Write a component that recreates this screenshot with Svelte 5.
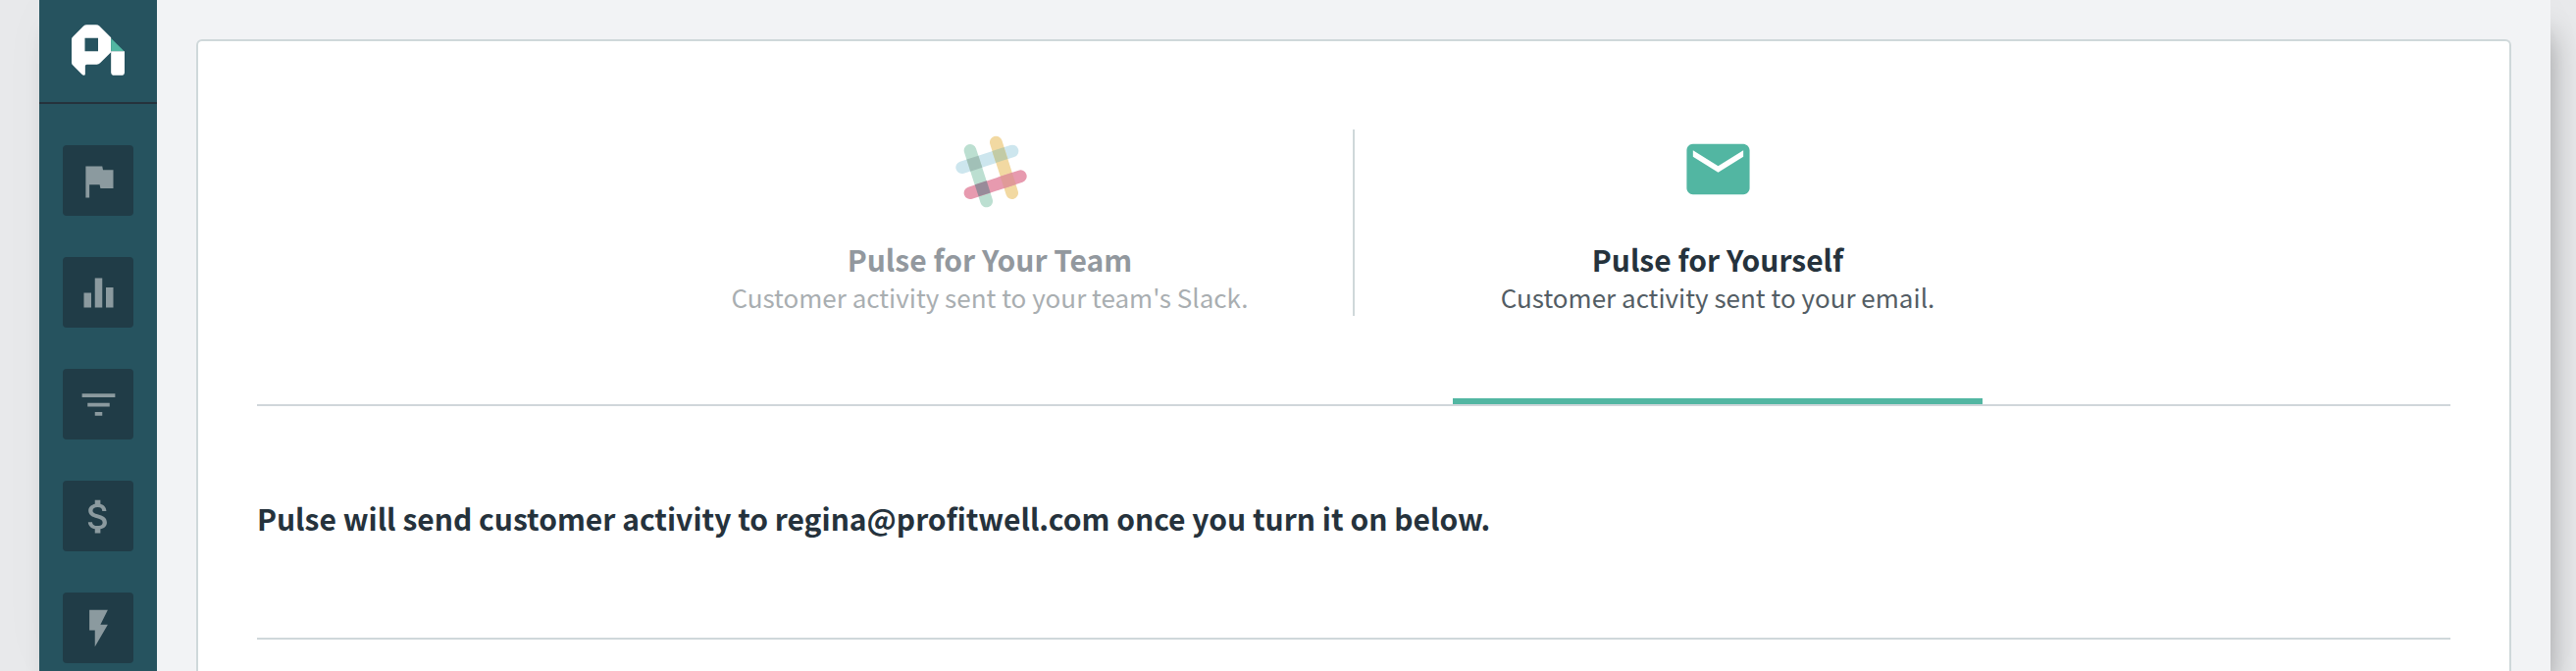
<script lang="ts">
	/**
	 * Pulse settings page
	 * Sidebar navigation plus the delivery picker (Slack team or personal email)
	 */
	type Tab = 'team' | 'yourself';

	let selected: Tab = $state('yourself');

	// 24x24 icon paths
	const navItems = [
		{ label: 'Goals', path: 'M14.4 6L14 4H5v17h2v-7h5.6l.4 2h7V6z' },
		{ label: 'Metrics', path: 'M10 20h4V4h-4v16zm-6 0h4v-8H4v8zM16 9v11h4V9h-4z' },
		{ label: 'Segments', path: 'M10 18h4v-2h-4v2zM3 6v2h18V6H3zm3 7h12v-2H6v2z' },
		{
			label: 'Revenue',
			path: 'M11.8 10.9c-2.27-.59-3-1.2-3-2.15 0-1.09 1.01-1.85 2.7-1.85 1.78 0 2.44.85 2.5 2.1h2.21c-.07-1.72-1.12-3.3-3.21-3.81V3h-3v2.16c-1.94.42-3.5 1.68-3.5 3.61 0 2.31 1.91 3.46 4.7 4.13 2.5.6 3 1.48 3 2.41 0 .69-.49 1.79-2.7 1.79-2.06 0-2.87-.92-2.98-2.1h-2.2c.12 2.19 1.76 3.42 3.68 3.83V21h3v-2.15c1.95-.37 3.5-1.5 3.5-3.55 0-2.84-2.43-3.81-4.7-4.4z'
		},
		{ label: 'Activity', path: 'M7 2v11h3v9l7-12h-4l4-8z' }
	];

	// Where the bars of the Slack hash cross
	const crossings = [
		{ x: 161, y: 140, fill: '#a1c0b7' },
		{ x: 186, y: 217, fill: '#988b99' },
		{ x: 239, y: 114, fill: '#c2cba5' },
		{ x: 264, y: 192, fill: '#e09a98' }
	];
</script>

<div class="shell">
	<aside class="sidebar">
		<a class="logo" href="#home" aria-label="Home">
			<svg viewBox="220 75 160 153" aria-hidden="true">
				<path
					fill="#fff"
					fill-rule="evenodd"
					d="M266 75H294Q300 75 304 79L339 114V158L306 191Q302 195 296 195H266Q261 195 261 200V224Q261 228 257 228Q254 228 251 225L223 197Q220 194 220 189V119Q220 115 223 112L256 79Q260 75 266 75ZM260 115V155H300V115Z"
				/>
				<path fill="#52b6a2" d="M339 116L379 155H339Z" />
				<path fill="#fff" d="M339 155H380V218Q380 228 370 228H349Q339 228 339 218Z" />
			</svg>
		</a>
		<nav class="nav" aria-label="Main">
			{#each navItems as item (item.label)}
				<a class="nav-item" href="#{item.label.toLowerCase()}" aria-label={item.label}>
					<svg viewBox="0 0 24 24" aria-hidden="true"><path d={item.path} /></svg>
				</a>
			{/each}
		</nav>
	</aside>

	<main class="main">
		<section class="card">
			<div class="tabs" role="tablist">
				<button
					type="button"
					role="tab"
					class="tab"
					class:active={selected === 'team'}
					aria-selected={selected === 'team'}
					onclick={() => (selected = 'team')}
				>
					<span class="tab-icon">
						<svg class="slack" viewBox="88 36 240 240" aria-hidden="true">
							<g stroke-width="38" stroke-linecap="round">
								<path stroke="#cde6ee" d="M123 152L277 102" />
								<path stroke="#f2d9a2" d="M227 75L276 230" />
								<path stroke="#bcdfd1" d="M148 100L198 255" />
								<path stroke="#e79aaf" d="M148 230L302 179" />
							</g>
							{#each crossings as c}
								<rect
									x={c.x - 19}
									y={c.y - 19}
									width="38"
									height="38"
									fill={c.fill}
									transform="rotate(-18 {c.x} {c.y})"
								/>
							{/each}
						</svg>
					</span>
					<span class="tab-title">Pulse for Your Team</span>
					<span class="tab-text">Customer activity sent to your team's Slack.</span>
				</button>

				<div class="divider"></div>

				<button
					type="button"
					role="tab"
					class="tab"
					class:active={selected === 'yourself'}
					aria-selected={selected === 'yourself'}
					onclick={() => (selected = 'yourself')}
				>
					<span class="tab-icon">
						<svg class="mail" viewBox="0 0 24 24" aria-hidden="true">
							<path
								d="M20 4H4c-1.1 0-1.99.9-1.99 2L2 18c0 1.1.9 2 2 2h16c1.1 0 2-.9 2-2V6c0-1.1-.9-2-2-2zm0 4l-8 5-8-5V6l8 5 8-5v2z"
							/>
						</svg>
					</span>
					<span class="tab-title">Pulse for Yourself</span>
					<span class="tab-text">Customer activity sent to your email.</span>
				</button>
			</div>

			<h2 class="notice">
				Pulse will send customer activity to regina@profitwell.com once you turn it on below.
			</h2>
		</section>
	</main>
</div>

<style>
	:global(body) {
		background: #e8e9eb;
	}

	.shell {
		display: flex;
		min-height: 100vh;
		margin: 0 26px 0 40px;
		background: #f2f3f5;
		box-shadow:
			0 0 60px rgba(0, 0, 0, 0.02),
			10px 26px 30px -10px rgba(0, 0, 0, 0.33);
		font-family: 'Noto Sans CJK JP', 'Noto Sans', sans-serif;
		color: #25323c;
	}

	.sidebar {
		flex: 0 0 120px;
		background: #26535f;
	}

	.logo {
		display: flex;
		justify-content: center;
		align-items: center;
		height: 102px;
		padding-bottom: 2px;
		border-bottom: 2px solid #25323c;
	}

	.logo svg {
		width: 54px;
		height: 52px;
	}

	.nav {
		display: flex;
		flex-direction: column;
		align-items: center;
		gap: 42px;
		padding-top: 42px;
	}

	.nav-item {
		display: flex;
		align-items: center;
		justify-content: center;
		width: 72px;
		height: 72px;
		background: #203c47;
		border-radius: 4px;
	}

	.nav-item svg {
		width: 45px;
		height: 45px;
		fill: #8b9a9f;
	}

	.main {
		display: flex;
		flex: 1;
		padding: 40px 40px 0;
	}

	.card {
		flex: 1;
		padding: 60px 60px 0;
		background: #fff;
		border: 2px solid #cfd8da;
		border-bottom: none;
		border-radius: 6px 6px 0 0;
	}

	.tabs {
		display: flex;
		justify-content: center;
		gap: 100px;
		border-bottom: 2px solid #d0d6da;
	}

	.tab {
		display: flex;
		flex-direction: column;
		align-items: center;
		box-sizing: border-box;
		width: 540px;
		padding: 30px 0 84px;
		font: inherit;
		color: #92989e;
		background: none;
		border: none;
		border-bottom: 6px solid transparent;
		cursor: pointer;
	}

	.tab.active {
		color: #25323c;
		border-bottom-color: #52b6a2;
	}

	.tab-icon {
		display: flex;
		align-items: center;
		justify-content: center;
		height: 80px;
		margin-bottom: 32px;
	}

	.slack {
		width: 80px;
		height: 80px;
	}

	.mail {
		width: 77px;
		height: 77px;
		fill: #52b6a2;
	}

	.tab-title {
		font-size: 30px;
		font-weight: 700;
		line-height: 40px;
	}

	.tab-text {
		font-size: 26px;
		line-height: 38px;
		color: #a9aeb1;
	}

	.tab.active .tab-text {
		color: #535d64;
	}

	.divider {
		width: 2px;
		height: 190px;
		margin-top: 30px;
		background: #cfd8da;
	}

	.notice {
		margin: 0;
		padding: 94px 0 102px;
		font-size: 30px;
		font-weight: 700;
		line-height: 40px;
		border-bottom: 2px solid #cfd8da;
	}
</style>
